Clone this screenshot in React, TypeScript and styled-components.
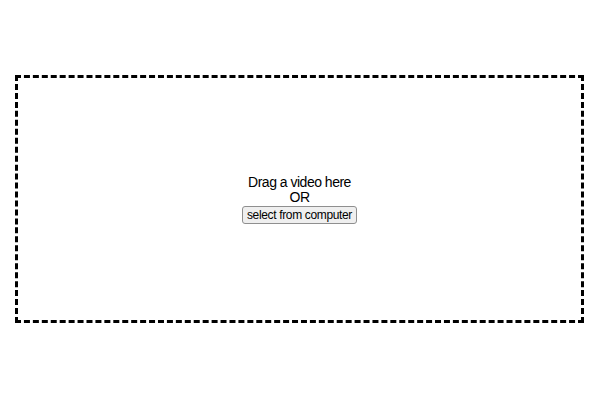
import styled, { createGlobalStyle } from 'styled-components';

const GlobalStyle = createGlobalStyle`
  html, body {
    margin: 0;
    background: #ffffff;
  }

  body {
    font-family: 'Liberation Sans', Arial, sans-serif;
    color: #000000;
  }
`;

const Page = styled.div`
  padding: 75px 16px 0 15px;
`;

const DropZone = styled.div`
  box-sizing: border-box;
  display: flex;
  flex-direction: column;
  align-items: center;
  justify-content: center;
  height: 248px;
  border: 3px dashed #000000;
  font-size: 14px;
  letter-spacing: -0.5px;
  line-height: 15px;
`;

const Line = styled.div`
  text-align: center;
`;

const SelectButton = styled.button`
  margin-top: 1px;
  padding: 1px 4px;
  border: 1px solid #8f8f8f;
  border-radius: 3px;
  background: #efefef;
  color: #000000;
  font-family: 'Liberation Sans', Arial, sans-serif;
  font-size: 12px;
  letter-spacing: -0.35px;
  line-height: 14px;
  cursor: pointer;
`;

const App = () => {
  return (
    <>
      <GlobalStyle />
      <Page>
        <DropZone>
          <Line>Drag a video here</Line>
          <Line>OR</Line>
          <SelectButton type="button">select from computer</SelectButton>
        </DropZone>
      </Page>
    </>
  );
};

export default App;
